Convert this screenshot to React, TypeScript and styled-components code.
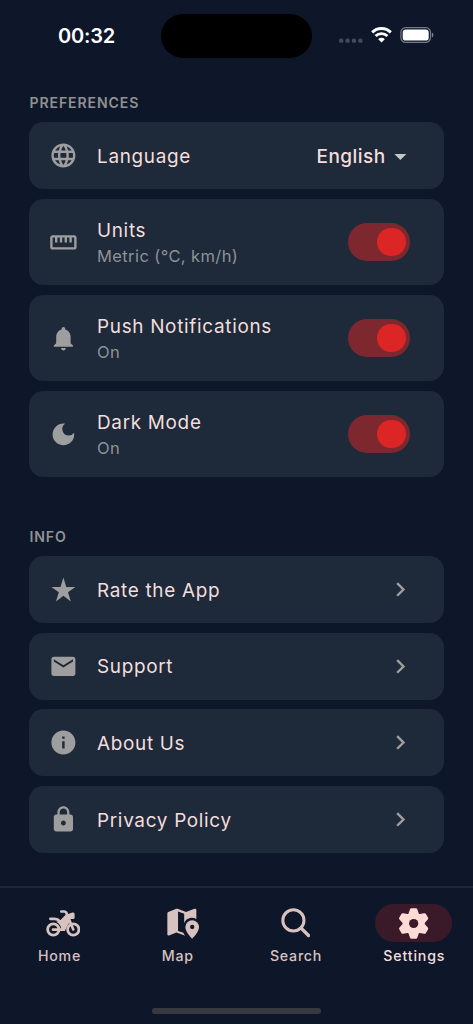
import type { ReactNode } from 'react';
import type { IconType } from 'react-icons';
import {
  MdArrowDropDown,
  MdChevronRight,
  MdDarkMode,
  MdEmail,
  MdInfo,
  MdLanguage,
  MdLock,
  MdNotifications,
  MdStraighten,
} from 'react-icons/md';
import styled, { createGlobalStyle, ThemeProvider } from 'styled-components';

const theme = {
  colors: {
    background: '#0e172a',
    card: '#1e293a',
    titles: '#f3dedc',
    subtitles: '#8f9296',
    icons: '#9e9e9e',
    section: '#919191',
    navIcon: '#d8c2bf',
    navActive: '#ffdad6',
    navPill: '#3a1a29',
    track: '#7d282f',
    thumb: '#dc2626',
  },
};

const GlobalStyle = createGlobalStyle`
  * {
    box-sizing: border-box;
  }

  body {
    margin: 0;
    background: ${theme.colors.background};
    font-family: Inter, sans-serif;
  }
`;

const Screen = styled.div`
  display: flex;
  flex-direction: column;
  width: 473px;
  height: 1024px;
  overflow: hidden;
  background: ${({ theme }) => theme.colors.background};
`;

const StatusBar = styled.header`
  display: grid;
  grid-template-columns: 161px 151px 1fr;
  align-items: center;
  height: 44px;
  margin-top: 14px;
`;

const Clock = styled.div`
  padding-left: 12px;
  color: #fff;
  font-size: 20px;
  font-weight: 600;
  letter-spacing: -0.2px;
  text-align: center;
`;

const Island = styled.div`
  height: 44px;
  border-radius: 22px;
  background: #000;
`;

const StatusIcons = styled.div`
  display: flex;
  align-items: center;
  gap: 8px;
  padding: 0 0 2px 27px;
`;

const Content = styled.main`
  flex: 1;
  padding: 34px 29px 0;
`;

const Section = styled.section`
  & + & {
    margin-top: 48.6px;
  }
`;

const SectionTitle = styled.h2`
  margin: 0;
  height: 30px;
  padding-left: 0.5px;
  color: ${({ theme }) => theme.colors.section};
  font-size: 14.1px;
  font-weight: 600;
  line-height: 21px;
  letter-spacing: 0.88px;
`;

const CardList = styled.div`
  display: flex;
  flex-direction: column;
  gap: 9.6px;
`;

const Card = styled.div<{ tall?: boolean }>`
  display: flex;
  align-items: center;
  height: ${({ tall }) => (tall ? '86.4px' : '67.2px')};
  padding: 0 33.6px 0 19.5px;
  border-radius: 14.4px;
  background: ${({ theme }) => theme.colors.card};
`;

const CardIcon = styled.div`
  display: flex;
  width: 48.5px;
  color: ${({ theme }) => theme.colors.icons};
`;

const CardText = styled.div`
  flex: 1;
`;

const CardTitle = styled.div<{ tall?: boolean }>`
  padding-top: ${({ tall }) => (tall ? '0.8px' : '2.4px')};
  color: ${({ theme }) => theme.colors.titles};
  font-size: 18.9px;
  line-height: 28px;
  letter-spacing: 0.7px;
`;

const CardSubtitle = styled.div`
  margin-top: -1px;
  color: ${({ theme }) => theme.colors.subtitles};
  font-size: 16.5px;
  line-height: 24px;
  letter-spacing: 0.4px;
`;

const Select = styled.div`
  display: flex;
  align-items: center;
  padding-top: 1px;
  color: ${({ theme }) => theme.colors.titles};
  font-size: 19px;
  font-weight: 500;
  letter-spacing: 0.45px;

  svg {
    color: #c4c7c8;
    margin-right: -4px;
  }
`;

const Track = styled.div`
  display: flex;
  align-items: center;
  justify-content: flex-end;
  width: 62.4px;
  height: 38.4px;
  padding: 4.8px;
  border-radius: 19.2px;
  background: ${({ theme }) => theme.colors.track};
`;

const Thumb = styled.div`
  width: 28.8px;
  height: 28.8px;
  border-radius: 50%;
  background: ${({ theme }) => theme.colors.thumb};
`;

const Chevron = styled(MdChevronRight)`
  margin-right: -4px;
  color: ${({ theme }) => theme.colors.icons};
`;

const NavBar = styled.nav`
  display: grid;
  grid-template-columns: repeat(4, 1fr);
  height: 122.4px;
  padding-top: 16.4px;
  border-top: 2px solid #1d263a;
`;

const NavItem = styled.div<{ active?: boolean }>`
  display: flex;
  flex-direction: column;
  align-items: center;
  color: ${({ theme, active }) => (active ? theme.colors.navActive : theme.colors.navIcon)};
`;

const NavPill = styled.div<{ active?: boolean; shift?: number }>`
  display: flex;
  align-items: center;
  justify-content: center;
  width: 77px;
  height: 38.4px;
  padding-left: ${({ shift }) => (shift ?? 0) * 2}px;
  border-radius: 19.2px;
  background: ${({ theme, active }) => (active ? theme.colors.navPill : 'transparent')};
`;

const NavLabel = styled.div<{ active?: boolean }>`
  margin-top: 3.6px;
  padding-left: 0.8px;
  color: ${({ theme, active }) => (active ? theme.colors.titles : theme.colors.navIcon)};
  font-size: 14.2px;
  font-weight: 500;
  line-height: 20px;
  letter-spacing: ${({ active }) => (active ? '0.85px' : '0.75px')};
`;

const HomeIndicator = styled.div`
  width: 169px;
  height: 6px;
  margin: 0 auto 10px;
  border-radius: 3px;
  background: #37393e;
`;

const CellularDots = () => (
  <svg width="24" height="16" viewBox="0 0 24 16" fill="#434a59">
    {[2.2, 8.6, 15, 21.4].map((x) => (
      <rect key={x} x={x - 2.1} y="11.4" width="4.2" height="4.4" rx="1.6" />
    ))}
  </svg>
);

const WifiIcon = () => (
  <svg width="21" height="16" viewBox="0 0 21 16" fill="none" stroke="#fff" strokeWidth="2.9">
    <path d="M1.2 5.4a13.2 13.2 0 0 1 18.6 0" />
    <path d="M4.6 9.1a8.3 8.3 0 0 1 11.8 0" />
    <path d="M10.5 15.6 7.2 12.2a4.7 4.7 0 0 1 6.6 0z" fill="#fff" stroke="none" />
  </svg>
);

const BatteryIcon = () => (
  <svg width="34" height="16" viewBox="0 0 34 16">
    <rect x="0.9" y="0.6" width="29.6" height="14.8" rx="4.8" fill="none" stroke="#747a86" strokeWidth="1.2" />
    <rect x="2.7" y="2.4" width="26" height="11.2" rx="3.2" fill="#fff" />
    <path d="M31.9 5.6v4.8a2.6 2.6 0 0 0 0-4.8z" fill="#7b808b" />
  </svg>
);

const StarIcon = ({ size }: { size?: number }) => (
  <svg width={size} height={size} viewBox="0 0 24 24" fill="currentColor">
    <path d="M14.43 10 12 2l-2.43 8H2l6.18 4.41L5.83 22 12 17.31 18.18 22l-2.35-7.59L22 10z" />
  </svg>
);

const MotorcycleIcon = () => (
  <svg width="34.6" height="27" viewBox="17 27 104 81" fill="none" stroke="currentColor">
    <circle cx="39" cy="85.500" r="17" strokeWidth="8.500" />
    <circle cx="99" cy="85.500" r="17" strokeWidth="8.500" />
    <path d="M38 86H70" strokeWidth="8" strokeLinecap="round" />
    <path d="M63 31.500H72Q76 31.500 78 35L99 85.500" strokeWidth="8" strokeLinecap="round" strokeLinejoin="round" />
    <path d="M30 53.500H43Q52 53.500 60 62" strokeWidth="8" strokeLinecap="round" />
    <path
      d="M76 41 84 39 96 34.500Q103 33 103 39V50Q103 54 98 54H89L93 61Q83 68 79 78L74 90H62Q65 72 48 62Q55 61 60 58Z"
      fill="currentColor"
      stroke="none"
    />
  </svg>
);

const MapPinIcon = () => (
  <svg width="32.4" height="31" viewBox="0 0 97 93" fill="currentColor">
    <path
      fillRule="evenodd"
      d="M4 12 28 2.5Q30 2 32 2.6L57 12 82 2.4Q88 1 88 6V33Q81 29 72 29.500Q56 32 51.500 46V17.500L33 10.500V69L49 74.500Q51 80 55 83.500L28 73.500 6 82.500Q1 84 1 79V16Q1 13.500 4 12Z"
    />
    <path
      fillRule="evenodd"
      d="M75.500 36.500a20.500 20.500 0 0 1 20.500 20.500c0 13-13 28-20.500 35-7.500-7-20.500-22-20.500-35a20.500 20.500 0 0 1 20.500-20.500zM75.500 50.500a6.500 6.500 0 1 0 0 13 6.500 6.500 0 0 0 0-13z"
    />
  </svg>
);

const SearchIcon = () => (
  <svg width="29.500" height="29.500" viewBox="0 0 88 88" fill="none" stroke="currentColor" strokeWidth="9">
    <circle cx="37" cy="37" r="31.500" />
    <path d="m60 60 22 22" strokeWidth="10" strokeLinecap="round" />
  </svg>
);

const GearIcon = () => (
  <svg width="29.300" height="31" viewBox="-44 -47 88 94" fill="currentColor">
    <mask id="gear-hole">
      <rect x="-50" y="-50" width="100" height="100" fill="#fff" />
      <circle r="14" fill="#000" />
    </mask>
    <g mask="url(#gear-hole)">
      <circle r="33" />
      {[0, 60, 120, 180, 240, 300].map((angle) => (
        <path
          key={angle}
          transform={`rotate(${angle})`}
          d="M-17-26-11-43Q-10-46.500-7-46.500H7Q10-46.500 11-43L17-26Z"
        />
      ))}
    </g>
  </svg>
);

interface SettingRowProps {
  icon: IconType | ((props: { size?: number }) => ReactNode);
  title: string;
  subtitle?: string;
  children?: ReactNode;
}

const SettingRow = ({ icon: Icon, title, subtitle, children }: SettingRowProps) => (
  <Card tall={!!subtitle}>
    <CardIcon>
      <Icon size={28.8} />
    </CardIcon>
    <CardText>
      <CardTitle tall={!!subtitle}>{title}</CardTitle>
      {subtitle && <CardSubtitle>{subtitle}</CardSubtitle>}
    </CardText>
    {children ?? <Chevron size={28.8} />}
  </Card>
);

const Toggle = () => (
  <Track role="switch" aria-checked>
    <Thumb />
  </Track>
);

const navItems = [
  { name: 'Home', icon: <MotorcycleIcon />, shift: 4 },
  { name: 'Map', icon: <MapPinIcon />, shift: 5.5 },
  { name: 'Search', icon: <SearchIcon /> },
  { name: 'Settings', icon: <GearIcon />, active: true },
];

const App = () => (
  <ThemeProvider theme={theme}>
    <GlobalStyle />
    <Screen>
      <StatusBar>
        <Clock>00:32</Clock>
        <Island />
        <StatusIcons>
          <CellularDots />
          <WifiIcon />
          <BatteryIcon />
        </StatusIcons>
      </StatusBar>

      <Content>
        <Section>
          <SectionTitle>PREFERENCES</SectionTitle>
          <CardList>
            <SettingRow icon={MdLanguage} title="Language">
              <Select>
                English
                <MdArrowDropDown size={28.8} />
              </Select>
            </SettingRow>
            <SettingRow icon={MdStraighten} title="Units" subtitle="Metric (°C, km/h)">
              <Toggle />
            </SettingRow>
            <SettingRow icon={MdNotifications} title="Push Notifications" subtitle="On">
              <Toggle />
            </SettingRow>
            <SettingRow icon={MdDarkMode} title="Dark Mode" subtitle="On">
              <Toggle />
            </SettingRow>
          </CardList>
        </Section>

        <Section>
          <SectionTitle>INFO</SectionTitle>
          <CardList>
            <SettingRow icon={StarIcon} title="Rate the App" />
            <SettingRow icon={MdEmail} title="Support" />
            <SettingRow icon={MdInfo} title="About Us" />
            <SettingRow icon={MdLock} title="Privacy Policy" />
          </CardList>
        </Section>
      </Content>

      <NavBar>
        {navItems.map(({ name, icon, shift, active }) => (
          <NavItem key={name} active={active}>
            <NavPill active={active} shift={shift}>
              {icon}
            </NavPill>
            <NavLabel active={active}>{name}</NavLabel>
          </NavItem>
        ))}
      </NavBar>
      <HomeIndicator />
    </Screen>
  </ThemeProvider>
);

export default App;
